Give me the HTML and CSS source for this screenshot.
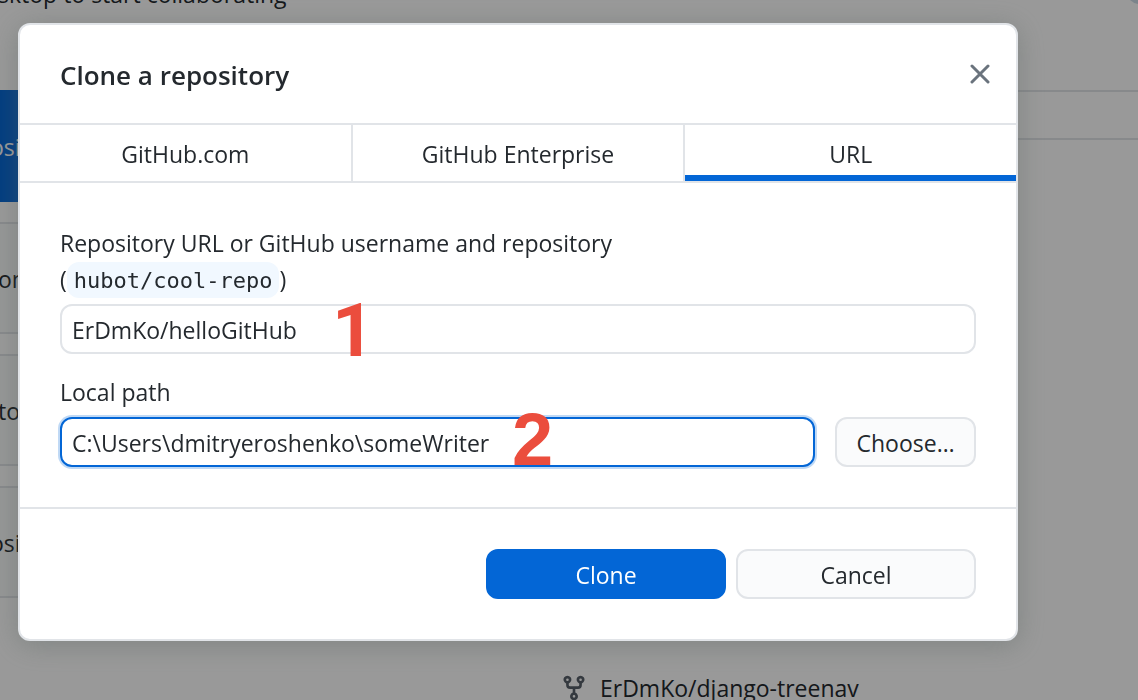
FILE: index.html
```html
<!DOCTYPE html>
<html lang="en">
<head>
<meta charset="utf-8">
<meta name="viewport" content="width=device-width, initial-scale=1">
<title>Clone a repository</title>
<link rel="stylesheet" href="styles.css">
</head>
<body>
<main class="welcome">
  <section class="welcome-actions">
    <p class="welcome-text">sktop to start collaborating</p>
    <ul class="actions">
      <li class="action action-primary">osi</li>
      <li class="action action-indent">on</li>
      <li class="action action-indent">to</li>
      <li class="action">osi</li>
    </ul>
  </section>
  <section class="repositories">
    <div class="filter"></div>
    <a class="repo" href="#">
      <svg class="repo-icon" viewBox="0 0 16 16" aria-hidden="true"><path fill-rule="evenodd" d="M5 3.25a.75.75 0 11-1.500 0 .75.75 0 011.500 0zm0 2.122a2.250 2.250 0 10-1.500 0v.878A2.250 2.250 0 005.750 8.500h1.500v2.128a2.251 2.251 0 101.500 0V8.500h1.500a2.250 2.250 0 002.250-2.250v-.878a2.250 2.250 0 10-1.500 0v.878a.75.75 0 01-.75.75h-4.500A.75.75 0 015 6.250v-.878zm3.750 7.378a.75.75 0 11-1.500 0 .75.75 0 011.500 0zm3-8.750a.75.75 0 100-1.500.75.75 0 000 1.500z"/></svg>
      <span>ErDmKo/django-treenav</span>
    </a>
  </section>
  <svg class="corner-art" viewBox="0 0 8 4" aria-hidden="true"><path d="M0 0H8V4Q3 3 0 0Z"/></svg>
</main>
<div class="backdrop">
  <form class="dialog" role="dialog" aria-labelledby="dialog-title">
    <header class="dialog-header">
      <h1 class="dialog-title" id="dialog-title">Clone a repository</h1>
      <button class="close" type="button" aria-label="Close">
        <svg class="close-icon" viewBox="0 0 20 20" aria-hidden="true"><path d="M2 2L18 18M18 2L2 18"/></svg>
      </button>
    </header>
    <nav class="tabs" role="tablist">
      <button class="tab" type="button" role="tab">GitHub.com</button>
      <button class="tab" type="button" role="tab">GitHub Enterprise</button>
      <button class="tab tab-selected" type="button" role="tab" aria-selected="true">URL</button>
    </nav>
    <div class="dialog-body">
      <div class="field">
        <label class="label" for="url">Repository URL or GitHub username and repository<br>(<code class="code">hubot/cool-repo</code>)</label>
        <input class="input" id="url" type="text" value="ErDmKo/helloGitHub">
        <span class="marker marker-one">1</span>
      </div>
      <div class="field">
        <label class="label" for="path">Local path</label>
        <div class="path-row">
          <input class="input input-focused" id="path" type="text" value="C:\Users\dmitryeroshenko\someWriter">
          <button class="button" type="button">Choose…</button>
        </div>
        <span class="marker marker-two">2</span>
      </div>
    </div>
    <footer class="dialog-footer">
      <button class="button button-wide button-primary" type="submit">Clone</button>
      <button class="button button-wide" type="button">Cancel</button>
    </footer>
  </form>
</div>
</body>
</html>
```
FILE: styles.css
```css
* {
  box-sizing: border-box;
}

body {
  margin: 0;
  min-height: 100vh;
  overflow: hidden;
  background: #fff;
  color: #24292e;
  font: 23px/36px "Open Sans", "Noto Sans", sans-serif;
}

button,
input {
  font: inherit;
  color: inherit;
}

.welcome {
  display: grid;
  grid-template-columns: 520px 1fr;
  height: 100vh;
  overflow: hidden;
}

.welcome-actions {
  margin: -24px 0 0 -10px;
}

.welcome-text {
  margin: 0 0 78px;
  padding-left: 8px;
}

.actions {
  display: grid;
  gap: 20px;
  margin: 0;
  padding: 0;
  list-style: none;
}

.action {
  display: flex;
  align-items: center;
  height: 112px;
  padding-top: 2px;
  border: 2px solid #e1e4e8;
  border-left: 0;
  background: #fafbfc;
}

.action-primary {
  border-color: #0366d6;
  background: #0366d6;
  color: #fff;
}

.action-indent {
  padding-left: 8px;
}

.repositories {
  padding-top: 90px;
}

.filter {
  height: 50px;
  border: solid #e1e4e8;
  border-width: 2px 0;
}

.repo {
  display: flex;
  align-items: center;
  gap: 12px;
  margin-top: 530px;
  padding-left: 40px;
  color: #24292e;
  text-decoration: none;
}

.repo-icon {
  width: 28px;
  height: 32px;
  fill: #586069;
}

.corner-art {
  position: absolute;
  top: 0;
  right: 0;
  width: 8px;
  height: 4px;
  fill: #cfdce8;
}

.backdrop {
  position: fixed;
  inset: 0;
  padding: 23px 120px 23px 18px;
  background: rgba(0, 0, 0, 0.4);
}

.dialog {
  border: 2px solid #e1e4e8;
  border-radius: 12px;
  background: #fff;
  box-shadow: 0 4px 28px rgba(88, 100, 96, 0.4);
}

.dialog-header {
  display: flex;
  align-items: center;
  justify-content: space-between;
  height: 100px;
  padding: 0 24px 0 40px;
  border-bottom: 2px solid #e1e4e8;
}

.dialog-title {
  margin: 0;
  padding-top: 2px;
  font-size: 26px;
  font-weight: 600;
}

.close {
  display: flex;
  padding: 2px;
  border: 0;
  background: none;
}

.close-icon {
  width: 20px;
  height: 20px;
  fill: none;
  stroke: #6a737d;
  stroke-width: 3;
  stroke-linecap: round;
}

.tabs {
  display: grid;
  grid-template-columns: repeat(3, 1fr);
  gap: 2px;
  height: 58px;
  border-bottom: 2px solid #e1e4e8;
  background: #e1e4e8;
}

.tab {
  padding: 2px 0 0;
  border: 0;
  background: #fff;
}

.tab-selected {
  box-shadow: inset 0 -6px #0366d6;
}

.dialog-body {
  display: grid;
  gap: 20px;
  padding: 42px 40px 40px;
}

.field {
  position: relative;
}

.label {
  display: block;
  margin-bottom: 7px;
}

.code {
  padding: 6px 7px 5px;
  border-radius: 12px;
  background: #f1f8ff;
  font: 22px/30px "DejaVu Sans Mono", monospace;
}

.input {
  display: block;
  width: 100%;
  height: 50px;
  padding: 2px 10px 0;
  border: 2px solid #e1e4e8;
  border-radius: 12px;
  outline: 0;
  background: #fff;
}

.path-row {
  display: grid;
  grid-template-columns: 1fr 141px;
  gap: 20px;
}

.input-focused {
  border-color: #0366d6;
  box-shadow: 0 0 0 2px #c0d9f5;
}

.button {
  height: 50px;
  padding: 2px 16px 0;
  border: 2px solid #e1e4e8;
  border-radius: 12px;
  background: #fafbfc;
}

.button-wide {
  width: 240px;
}

.button-primary {
  border-color: #0366d6;
  background: #0366d6;
  color: #fff;
}

.dialog-footer {
  display: flex;
  justify-content: flex-end;
  gap: 10px;
  padding: 40px;
  border-top: 2px solid #e1e4e8;
}

.marker {
  position: absolute;
  color: #eb4d3d;
  font: bold 74px/74px "Liberation Sans", Arial, sans-serif;
  pointer-events: none;
}

.marker-one {
  top: 69px;
  left: 272px;
  font-family: Roboto, sans-serif;
}

.marker-two {
  top: 29px;
  left: 452px;
}
```
